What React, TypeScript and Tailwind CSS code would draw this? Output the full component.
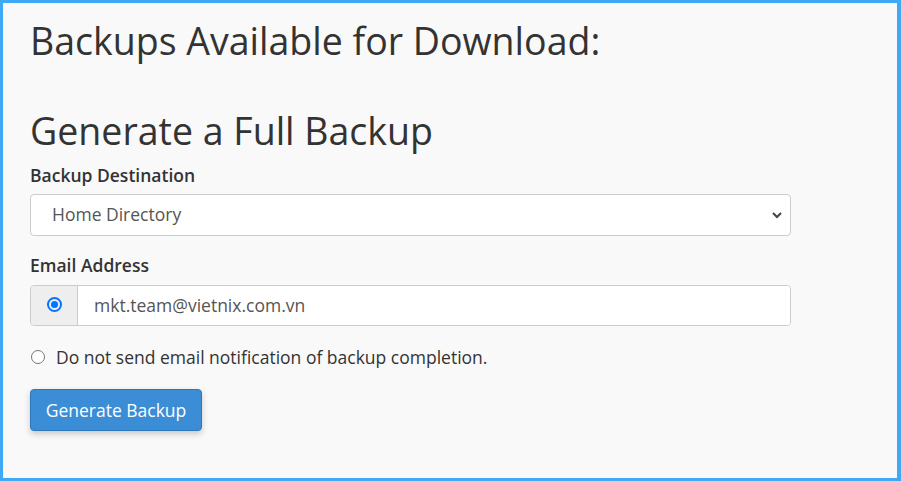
import React from 'react';

export default function App() {
  return (
    <div className="w-[901px] h-[481px] border-[3px] border-r-4 border-[#3fa9f5] bg-[#f9f9f9] text-[#333] overflow-hidden" style={{ fontFamily: '"Open Sans", sans-serif' }}>
      <div className="pl-[27px] w-[788px]">
        <h1 className="text-[37.5px] leading-[40px] mt-[18px]">Backups Available for Download:</h1>
        <h2 className="text-[37.5px] leading-[40px] mt-[50px]">Generate a Full Backup</h2>

        <label className="block mt-[12px] text-[17.5px] font-semibold leading-[24px]">Backup Destination</label>
        <div className="mt-[7px] h-[42px] bg-white border border-[#ccc] rounded flex items-center justify-between pl-[21px] pr-[5px]">
          <span className="text-[17.5px] text-[#555] mb-[1px]">Home Directory</span>
          <svg width="14" height="14" viewBox="0 0 14 14" className="mr-[1px]">
            <path d="M3 5 L7 9 L11 5" fill="none" stroke="#444" strokeWidth="2" />
          </svg>
        </div>

        <label className="block mt-[17px] text-[17.5px] font-semibold leading-[24px]">Email Address</label>
        <div className="mt-[8px] h-[41px] flex border border-[#ccc] rounded overflow-hidden">
          <div className="w-[47px] bg-[#eee] border-r border-[#ccc] flex items-center justify-center">
            <span className="w-[15px] h-[15px] rounded-full border-2 border-[#0075ff] flex items-center justify-center mb-[2px]">
              <span className="w-[7px] h-[7px] rounded-full bg-[#0075ff]" />
            </span>
          </div>
          <div className="flex-1 bg-white flex items-center pl-[16px] text-[17.5px] text-[#555]">mkt.team@vietnix.com.vn</div>
        </div>

        <div className="mt-[19px] flex items-center gap-[11px] h-[24px]">
          <span className="ml-[1px] w-[14px] h-[14px] rounded-full border border-[#767676] bg-white" />
          <span className="text-[17.5px] leading-[24px]">Do not send email notification of backup completion.</span>
        </div>

        <button className="mt-[20px] h-[42px] w-[172px] bg-[#3b8dd6] border border-[#2d78bd] rounded text-white text-[17.5px] shadow-[0_3px_6px_rgba(0,0,0,0.2)]">Generate Backup</button>
      </div>
    </div>
  );
}
